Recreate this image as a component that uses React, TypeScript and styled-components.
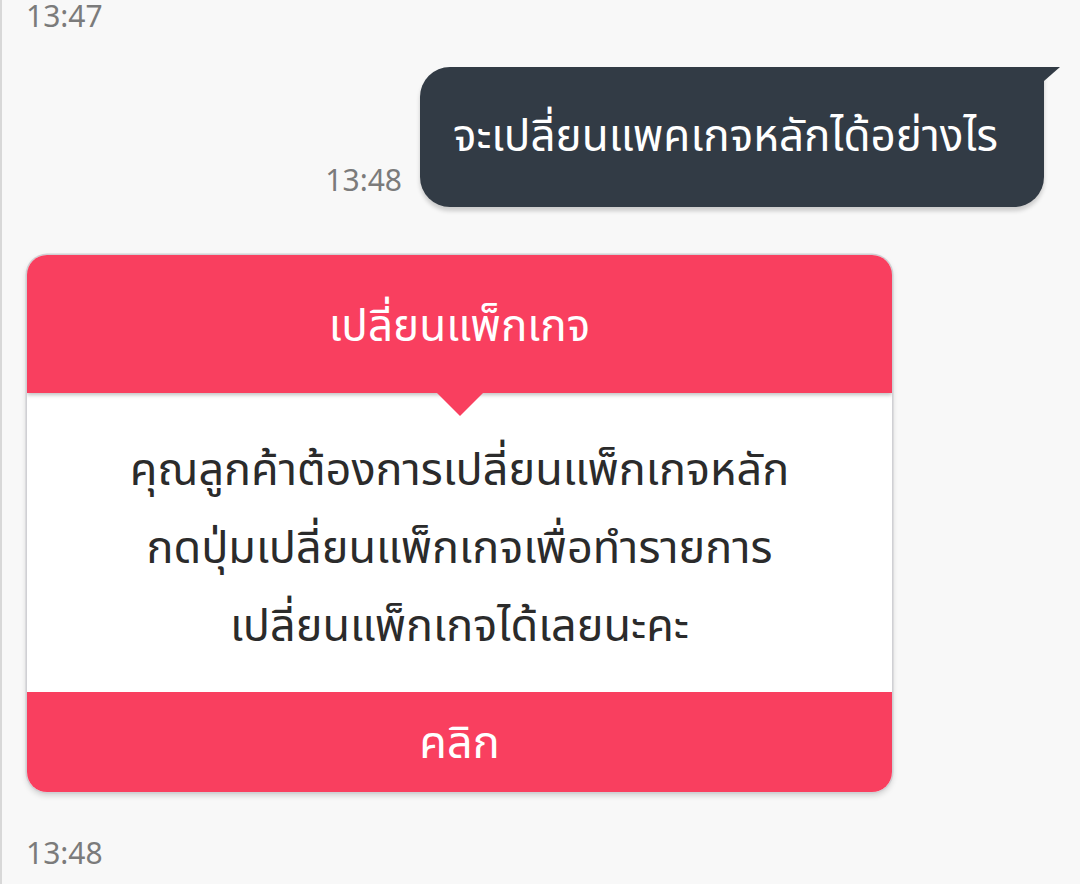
import React from 'react';
import styled, { createGlobalStyle } from 'styled-components';

const GlobalStyle = createGlobalStyle`
  html, body {
    margin: 0;
    padding: 0;
    background: #f8f8f8;
  }
  body {
    font-family: "Noto Sans", "Noto Sans Thai", "Open Sans", sans-serif;
  }
`;

const Screen = styled.div`
  width: 1080px;
  height: 884px;
  box-sizing: border-box;
  border-left: 2px solid #d8d8d8;
  background: #f8f8f8;
  display: flex;
  flex-direction: column;
  overflow: hidden;
`;

const Time = styled.div<{ $pad?: string }>`
  font-size: 30px;
  line-height: 30px;
  color: #7b7b7b;
  padding: ${(p) => p.$pad || '0'};
`;

const OutRow = styled.div`
  display: flex;
  justify-content: flex-end;
  align-items: flex-end;
  gap: 18px;
  padding: 36px 20px 0 0;
`;

const OutBubble = styled.div`
  position: relative;
  width: 624px;
  height: 140px;
  box-sizing: border-box;
  background: #323b45;
  border-radius: 30px 0 30px 30px;
  box-shadow: 0 4px 4px rgba(0, 0, 0, 0.18);
  color: #fff;
  font-size: 44px;
  display: flex;
  align-items: center;
  padding: 0 0 0 33px;
  margin-right: 16px;
  white-space: nowrap;

  &::after {
    content: '';
    position: absolute;
    top: 0;
    right: -16px;
    width: 0;
    height: 0;
    border-top: 14px solid #323b45;
    border-right: 16px solid transparent;
  }
`;

const Card = styled.div`
  margin: 48px 0 0 25px;
  width: 865px;
  border-radius: 20px;
  overflow: hidden;
  background: #fff;
  box-shadow: 0 0 0 1.5px #d0d0d4, 0 3px 6px rgba(0, 0, 0, 0.18);
  display: flex;
  flex-direction: column;
`;

const CardHeader = styled.div`
  position: relative;
  height: 138px;
  background: #f93f5f;
  color: #fff;
  font-size: 44px;
  display: flex;
  align-items: center;
  justify-content: center;
  padding-top: 6px;
  box-sizing: border-box;
  box-shadow: 0 2px 4px rgba(0, 0, 0, 0.25);
  z-index: 1;

  &::after {
    content: '';
    position: absolute;
    left: 50%;
    bottom: -23px;
    margin-left: -23px;
    border-top: 23px solid #f93f5f;
    border-left: 23px solid transparent;
    border-right: 23px solid transparent;
  }
`;

const CardBody = styled.div`
  height: 299px;
  box-sizing: border-box;
  padding-top: 36px;
  display: flex;
  flex-direction: column;
  align-items: center;
  color: #2b2b2b;
  font-size: 45px;
  line-height: 78px;
  white-space: nowrap;
`;

const CardButton = styled.div`
  height: 100px;
  background: #f93f5f;
  color: #fff;
  font-size: 45px;
  display: flex;
  align-items: center;
  justify-content: center;
  padding-top: 3px;
  box-sizing: border-box;
`;

export default function App() {
  return (
    <>
      <GlobalStyle />
      <Screen>
        <Time $pad="1px 0 0 24px">13:47</Time>
        <OutRow>
          <Time $pad="0 0 12px 0">13:48</Time>
          <OutBubble>จะเปลี่ยนแพคเกจหลักได้อย่างไร</OutBubble>
        </OutRow>
        <Card>
          <CardHeader>เปลี่ยนแพ็กเกจ</CardHeader>
          <CardBody>
            <div>คุณลูกค้าต้องการเปลี่ยนแพ็กเกจหลัก</div>
            <div>กดปุ่มเปลี่ยนแพ็กเกจเพื่อทำรายการ</div>
            <div>เปลี่ยนแพ็กเกจได้เลยนะคะ</div>
          </CardBody>
          <CardButton>คลิก</CardButton>
        </Card>
        <Time $pad="46px 0 0 24px">13:48</Time>
      </Screen>
    </>
  );
}
